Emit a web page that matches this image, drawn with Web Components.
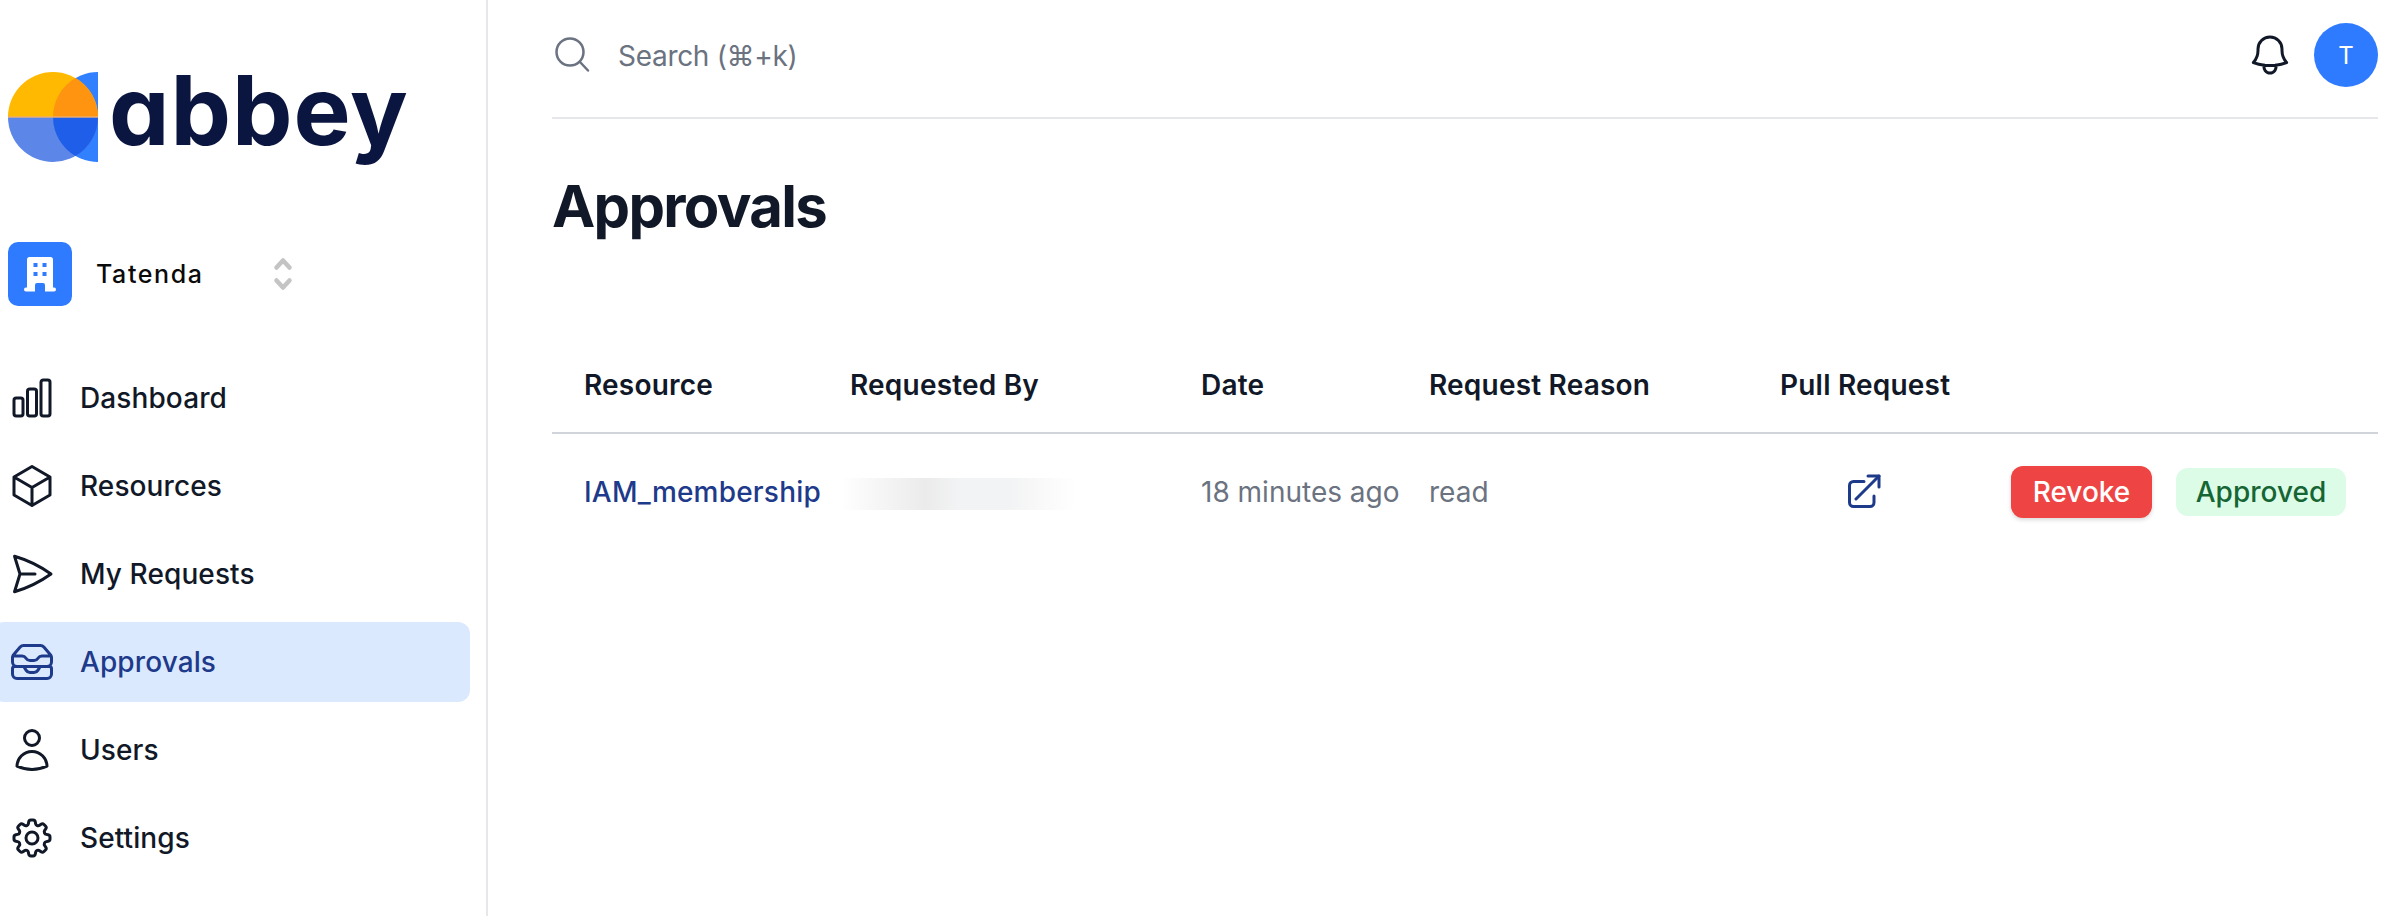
<!DOCTYPE html>
<html lang="en">
<head>
<meta charset="utf-8">
<title>Approvals</title>
<style>
  html, body { margin: 0; padding: 0; height: 100%; background: #fff; }
  body { font-family: Inter, "Liberation Sans", sans-serif; color: #111827; overflow: hidden; }
</style>
</head>
<body>
<app-shell>
  <side-bar slot="side">
    <abbey-logo></abbey-logo>
    <org-switch name="Tatenda"></org-switch>
    <nav-item icon="chart" label="Dashboard"></nav-item>
    <nav-item icon="cube" label="Resources"></nav-item>
    <nav-item icon="send" label="My Requests"></nav-item>
    <nav-item icon="inbox" label="Approvals" active></nav-item>
    <nav-item icon="user" label="Users"></nav-item>
    <nav-item icon="cog" label="Settings"></nav-item>
  </side-bar>
  <top-bar></top-bar>
  <page-title>Approvals</page-title>
  <approvals-table></approvals-table>
</app-shell>

<script>
const ICONS = {
  chart: '<path d="M3 13.125C3 12.504 3.504 12 4.125 12h2.25c.621 0 1.125.504 1.125 1.125v6.75C7.5 20.496 6.996 21 6.375 21h-2.25A1.125 1.125 0 013 19.875v-6.75zM9.75 8.625c0-.621.504-1.125 1.125-1.125h2.25c.621 0 1.125.504 1.125 1.125v11.25c0 .621-.504 1.125-1.125 1.125h-2.25a1.125 1.125 0 01-1.125-1.125V8.625zM16.5 4.125c0-.621.504-1.125 1.125-1.125h2.25C20.496 3 21 3.504 21 4.125v15.75c0 .621-.504 1.125-1.125 1.125h-2.25a1.125 1.125 0 01-1.125-1.125V4.125z"/>',
  cube: '<path d="M21 7.5l-9-5.25L3 7.5m18 0l-9 5.25m9-5.25v9l-9 5.25M3 7.5l9 5.25M3 7.5v9l9 5.25m0-9v9"/>',
  send: '<path d="M6 12L3.269 3.126A59.768 59.768 0 0121.485 12 59.77 59.77 0 013.27 20.876L5.999 12zm0 0h7.5"/>',
  inbox: '<path d="M7.875 14.25l1.214 1.942a2.25 2.25 0 001.908 1.058h2.006c.776 0 1.497-.4 1.908-1.058l1.214-1.942M2.41 9h4.636a2.25 2.25 0 011.872 1.002l.164.246a2.25 2.25 0 001.872 1.002h2.092a2.25 2.25 0 001.872-1.002l.164-.246A2.25 2.25 0 0116.954 9h4.636M2.41 9a2.25 2.25 0 00-.16.832V12a2.25 2.25 0 002.25 2.25h15A2.25 2.25 0 0021.75 12V9.832c0-.287-.055-.57-.16-.832M2.41 9a2.25 2.25 0 01.382-.632l3.285-3.832a2.25 2.25 0 011.708-.786h8.43c.657 0 1.281.287 1.709.786l3.284 3.832c.163.19.291.404.382.632M4.5 20.250h15A2.25 2.25 0 0021.75 18v-2.625c0-.621-.504-1.125-1.125-1.125H3.375c-.621 0-1.125.504-1.125 1.125V18a2.25 2.25 0 002.25 2.25z"/>',
  user: '<path d="M15.75 6a3.75 3.75 0 11-7.5 0 3.75 3.75 0 017.5 0zM4.501 20.118a7.5 7.5 0 0114.998 0A17.933 17.933 0 0112 21.75c-2.676 0-5.216-.584-7.499-1.632z"/>',
  cog: '<path d="M10.343 3.94c.09-.542.56-.94 1.11-.94h1.093c.55 0 1.02.398 1.11.94l.149.894c.07.424.384.764.78.93.398.164.855.142 1.205-.108l.737-.527a1.125 1.125 0 011.45.12l.773.774c.39.389.44 1.002.12 1.45l-.527.737c-.25.35-.272.806-.107 1.204.165.397.505.71.93.78l.893.15c.543.09.94.56.94 1.109v1.094c0 .55-.397 1.02-.94 1.11l-.893.149c-.425.07-.765.383-.93.78-.165.398-.143.854.107 1.204l.527.738c.32.447.269 1.06-.12 1.45l-.774.773a1.125 1.125 0 01-1.449.12l-.738-.527c-.35-.25-.806-.272-1.203-.107-.397.165-.71.505-.781.929l-.149.894c-.09.542-.56.94-1.11.94h-1.094c-.55 0-1.019-.398-1.11-.94l-.148-.894c-.071-.424-.384-.764-.781-.93-.398-.164-.854-.142-1.204.108l-.738.527c-.447.32-1.06.269-1.45-.12l-.773-.774a1.125 1.125 0 01-.12-1.45l.527-.737c.25-.35.273-.806.108-1.204-.165-.397-.505-.71-.93-.78l-.894-.15c-.542-.09-.94-.56-.94-1.109v-1.094c0-.55.398-1.02.94-1.11l.894-.149c.424-.07.765-.383.93-.78.165-.398.143-.854-.107-1.204l-.527-.738a1.125 1.125 0 01.12-1.45l.773-.773a1.125 1.125 0 011.45-.12l.737.527c.35.25.807.272 1.204.107.397-.165.71-.505.78-.929l.15-.894z"/><path d="M15 12a3 3 0 11-6 0 3 3 0 016 0z"/>'
};

class AppShell extends HTMLElement {
  connectedCallback() {
    this.attachShadow({ mode: 'open' });
    this.shadowRoot.innerHTML = `
      <style>
        :host { display: grid; grid-template-columns: 488px 1fr; height: 916px; }
        .main { padding: 0 26px 0 64px; min-width: 0; }
      </style>
      <slot name="side"></slot>
      <div class="main"><slot></slot></div>
    `;
  }
}

class SideBar extends HTMLElement {
  connectedCallback() {
    this.attachShadow({ mode: 'open' });
    this.shadowRoot.innerHTML = `
      <style>
        :host { display: block; border-right: 2px solid #e5e7eb; padding-right: 16px; height: 916px; box-sizing: border-box; }
        .list { display: flex; flex-direction: column; gap: 8px; }
      </style>
      <div class="list"><slot></slot></div>
    `;
  }
}

class AbbeyLogo extends HTMLElement {
  connectedCallback() {
    this.attachShadow({ mode: 'open' });
    this.shadowRoot.innerHTML = `
      <style>
        :host { display: flex; align-items: flex-start; gap: 11px; padding: 72px 0 0 8px; height: 90px; }
        svg { width: 90px; height: 90px; flex: none; display: block; }
        .word { font: 700 96px/90px Inter, "Liberation Sans", sans-serif; font-feature-settings: "cv11" 1; color: #0b1640; letter-spacing: 1px; margin-top: -7px; }
      </style>
      <svg viewBox="0 0 90 90">
        <path d="M90 0A45 45 0 0 0 90 90Z" fill="#3080ff"/>
        <path d="M0 45A45 45 0 0 1 90 45Z" fill="#ffb900"/>
        <path d="M0 45A45 45 0 0 0 90 45Z" fill="#5c86e8"/>
        <path d="M45 45A45 45 0 0 1 67.500 6 45 45 0 0 1 90 45Z" fill="#ff9410"/>
        <path d="M45 45A45 45 0 0 0 67.500 84 45 45 0 0 0 90 45Z" fill="#1f5ee8"/>
        <rect x="0" y="44.300" width="90" height="1.400" fill="#f0b070"/>
      </svg>
      <span class="word">abbey</span>
    `;
  }
}

class OrgSwitch extends HTMLElement {
  connectedCallback() {
    const name = this.getAttribute('name') || '';
    this.attachShadow({ mode: 'open' });
    this.shadowRoot.innerHTML = `
      <style>
        :host { display: flex; align-items: center; margin: 72px 0 44px 8px; height: 64px; }
        .badge { width: 64px; height: 64px; border-radius: 10px; background: #2f7bff; display: flex; align-items: center; justify-content: center; flex: none; }
        .name { width: 176px; margin-left: 24px; font-size: 25px; font-weight: 500; letter-spacing: 1.6px; color: #0a0a0a; }
        .updown { display: block; width: 22px; height: 36px; }
      </style>
      <div class="badge">
        <svg width="32" height="36" viewBox="0 0 32 36">
          <path fill="#fff" d="M3 3.500a2.500 2.500 0 0 1 2.500-2.500h21a2.500 2.500 0 0 1 2.500 2.500v28h1a2 2 0 0 1 0 4h-9v-6.500a2 2 0 0 0-2-2h-6a2 2 0 0 0-2 2v6.500h-9a2 2 0 0 1 0-4h1Z"/>
          <g fill="#2f7bff"><rect x="9.500" y="7" width="4" height="4"/><rect x="18.500" y="7" width="4" height="4"/><rect x="9.500" y="16" width="4" height="4"/><rect x="18.500" y="16" width="4" height="4"/></g>
        </svg>
      </div>
      <span class="name">${name}</span>
      <svg class="updown" viewBox="0 0 22 36" fill="none" stroke="#c4c4c4" stroke-width="4.500" stroke-linecap="round" stroke-linejoin="round">
        <path d="M4.500 11.500L11 4.500l6.500 7"/><path d="M4.500 24.500l6.500 7 6.500-7"/>
      </svg>
    `;
  }
}

class NavItem extends HTMLElement {
  connectedCallback() {
    const label = this.getAttribute('label') || '';
    const icon = ICONS[this.getAttribute('icon')] || '';
    this.attachShadow({ mode: 'open' });
    this.shadowRoot.innerHTML = `
      <style>
        :host { display: flex; align-items: center; height: 80px; margin-left: -8px; padding-left: 16px; border-radius: 12px; color: #111827;
                font-size: 28px; font-weight: 500; letter-spacing: .1px; }
        :host([active]) { background: #dbe9fe; color: #1e3a8a; }
        svg { width: 48px; height: 48px; flex: none; margin-right: 24px; }
      </style>
      <svg viewBox="0 0 24 24" fill="none" stroke="currentColor" stroke-width="1.5" stroke-linecap="round" stroke-linejoin="round">${icon}</svg>
      <span>${label}</span>
    `;
  }
}

class TopBar extends HTMLElement {
  connectedCallback() {
    this.attachShadow({ mode: 'open' });
    this.shadowRoot.innerHTML = `
      <style>
        :host { display: flex; align-items: center; height: 119px; border-bottom: 2px solid #e5e7eb; padding-bottom: 7px; box-sizing: border-box; }
        .search { width: 36px; height: 36px; color: #6b7280; flex: none; margin-left: 2px; }
        .hint { margin: 2px 0 0 28px; font-size: 28px; letter-spacing: -.3px; color: #6b7280; flex: 1; }
        .bell { width: 48px; height: 48px; color: #111827; flex: none; margin-right: 20px; }
        .avatar { width: 64px; height: 64px; border-radius: 50%; background: #2f7bff; color: #fff; font-size: 24px; display: flex; align-items: center; justify-content: center; flex: none; }
      </style>
      <svg class="search" viewBox="0 0 36 36" fill="none" stroke="currentColor" stroke-width="2.500" stroke-linecap="round">
        <circle cx="16" cy="15" r="13.500"/><path d="M26 25l8 8.500"/>
      </svg>
      <span class="hint">Search (⌘+k)</span>
      <svg class="bell" viewBox="0 0 24 24" fill="none" stroke="currentColor" stroke-width="1.5" stroke-linecap="round" stroke-linejoin="round">
        <path d="M14.857 17.082a23.848 23.848 0 005.454-1.31A8.967 8.967 0 0118 9.750v-.7V9A6 6 0 006 9v.75a8.967 8.967 0 01-2.312 6.022c1.733.64 3.56 1.085 5.455 1.31m5.714 0a24.255 24.255 0 01-5.714 0m5.714 0a3 3 0 11-5.714 0"/>
      </svg>
      <div class="avatar">T</div>
    `;
  }
}

class PageTitle extends HTMLElement {
  connectedCallback() {
    this.attachShadow({ mode: 'open' });
    this.shadowRoot.innerHTML = `
      <style>
        :host { display: block; margin-top: 51px; height: 72px; font-size: 58px; letter-spacing: -1.7px; line-height: 72px; font-weight: 700; color: #111827; }
      </style>
      <slot></slot>
    `;
  }
}

class ApprovalsTable extends HTMLElement {
  connectedCallback() {
    this.attachShadow({ mode: 'open' });
    this.shadowRoot.innerHTML = `
      <style>
        :host { display: block; margin-top: 116px; font-size: 28px; }
        .row { display: grid; grid-template-columns: 266px 351px 228px 351px 169px 1fr; padding-left: 32px; align-items: center; white-space: nowrap; }
        .head { height: 54px; padding-bottom: 20px; font-weight: 600; letter-spacing: .2px; color: #111827; border-bottom: 2px solid #d1d5db; }
        .body { height: 116px; color: #6b7280; }
        .res { color: #1e3a8a; font-weight: 500; letter-spacing: .2px; }
        .blur { margin: 4px 0 0 -9px; width: 234px; height: 32px;
                background: linear-gradient(90deg, #fff 0%, #f8f8f8 12%, #ebebeb 36%, #f2f3f4 50%, #f2f3f4 72%, #fafafa 88%, #fff 100%); }
        .pr { display: flex; justify-content: center; color: #1e3a8a; }
        .pr svg { width: 36px; height: 36px; display: block; }
        .actions { display: flex; align-items: center; margin-left: 62px; }
        .revoke { width: 141px; height: 52px; border-radius: 12px; background: #ef4444; color: #fff; font-weight: 500; display: flex; align-items: center; justify-content: center;
                  box-shadow: 0 2px 4px rgba(0,0,0,.15); }
        .badge { margin-left: 24px; width: 170px; height: 48px; border-radius: 12px; background: #dcfce7; color: #166534; font-weight: 500; display: flex; align-items: center; justify-content: center; }
      </style>
      <div class="row head">
        <div>Resource</div><div>Requested By</div><div>Date</div><div>Request Reason</div><div>Pull Request</div><div></div>
      </div>
      <div class="row body">
        <div class="res">IAM_membership</div>
        <div><div class="blur"></div></div>
        <div>18 minutes ago</div>
        <div>read</div>
        <div class="pr">
          <svg viewBox="0 0 36 36" fill="none" stroke="currentColor" stroke-width="3" stroke-linecap="round" stroke-linejoin="round">
            <path d="M17 7.500H6.500a4 4 0 0 0-4 4v17a4 4 0 0 0 4 4h16.500a4 4 0 0 0 4-4V22"/><path d="M9 25L32 2"/><path d="M21 2h11v11"/>
          </svg>
        </div>
        <div class="actions"><div class="revoke">Revoke</div><div class="badge">Approved</div></div>
      </div>
    `;
  }
}

customElements.define('app-shell', AppShell);
customElements.define('side-bar', SideBar);
customElements.define('abbey-logo', AbbeyLogo);
customElements.define('org-switch', OrgSwitch);
customElements.define('nav-item', NavItem);
customElements.define('top-bar', TopBar);
customElements.define('page-title', PageTitle);
customElements.define('approvals-table', ApprovalsTable);
</script>
</body>
</html>
